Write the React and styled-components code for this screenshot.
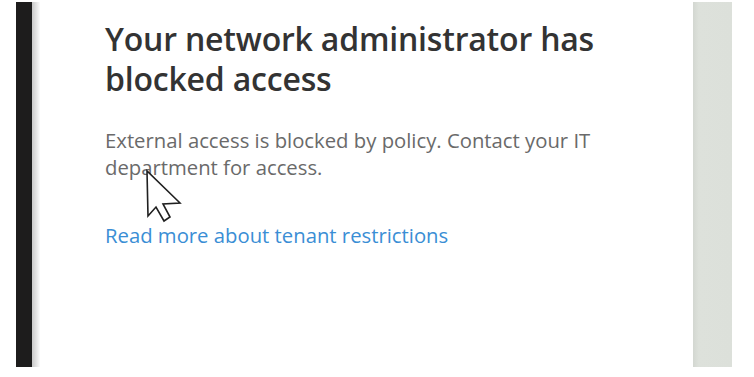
import React from "react";
import styled, { createGlobalStyle } from "styled-components";

const GlobalStyle = createGlobalStyle`
    html, body {
        margin: 0;
        background: #ffffff;
    }
`

const Screen = styled.div`
    width: 754px;
    height: 377px;
    box-sizing: border-box;
    padding: 2px 22px 10px 16px;
    display: flex;
    background: #ffffff;
    overflow: hidden;
`
const DarkEdge = styled.div`
    width: 16px;
    background: #1d1c1c;
`
const Shade = styled.div`
    width: 8px;
    background: linear-gradient(to right, #c9c9c9, #e6e6e6 60%, #fbfbfb);
`
const Card = styled.main`
    flex: 1;
    position: relative;
    padding: 17px 0 0 65px;
    background: #ffffff;
    font-family: "Open Sans", "Noto Sans", sans-serif;
`
const SidePanel = styled.div`
    width: 39px;
    background: linear-gradient(to right, #d3d7d1, #dde1db 15%, #dce0da);
`
const Title = styled.h1`
    margin: 0;
    font-size: 32px;
    line-height: 40px;
    font-weight: 600;
    color: #333333;
    letter-spacing: -0.2px;
    white-space: nowrap;
`
const Message = styled.p`
    margin: 28px 0 0;
    font-size: 20.3px;
    line-height: 27px;
    color: #6a6a6a;
    white-space: nowrap;
`
const MoreLink = styled.a`
    display: inline-block;
    margin-top: 40px;
    font-size: 20.3px;
    color: #3a8ed5;
    text-decoration: none;
`
const Pointer = styled.svg`
    position: absolute;
    left: 106px;
    top: 168px;
    width: 40px;
    height: 54px;
    overflow: visible;
`

export default function App() {
    return (
        <>
            <GlobalStyle />
            <Screen>
                <DarkEdge />
                <Shade />
                <Card>
                    <Title>
                        Your network administrator has
                        <br />
                        blocked access
                    </Title>
                    <Message>
                        External access is blocked by policy. Contact your IT
                        <br />
                        department for access.
                    </Message>
                    <MoreLink href="#">Read more about tenant restrictions</MoreLink>
                    <Pointer viewBox="0 0 40 54">
                        {/* arrow cursor */}
                        <path
                            d="M1 1 L2 46 L10 37 L18 51 L24 47 L17 34 L34 33 Z"
                            fill="#ffffff"
                            stroke="#202020"
                            strokeWidth="1.6"
                            strokeLinejoin="miter"
                        />
                    </Pointer>
                </Card>
                <SidePanel />
            </Screen>
        </>
    );
}
